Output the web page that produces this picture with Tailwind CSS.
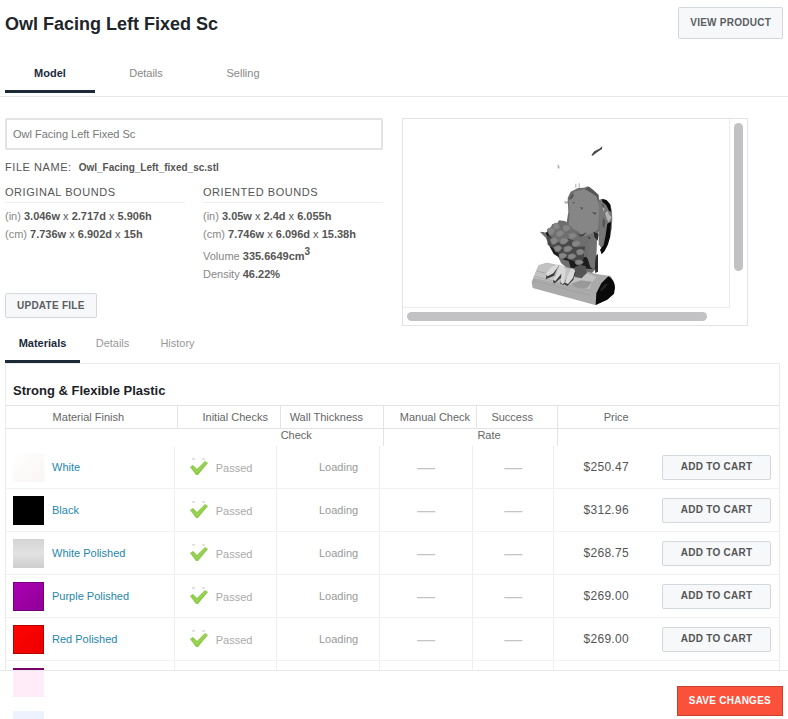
<!DOCTYPE html>
<html lang="en">

<head>
    <meta charset="UTF-8">
    <meta name="viewport" content="width=device-width, initial-scale=1.0">
    <title>Owl Facing Left Fixed Sc</title>
    <script src="https://cdn.jsdelivr.net/npm/@tailwindcss/browser@4"></script>
</head>

<body class="h-screen overflow-hidden bg-white font-['Liberation_Sans',Arial,sans-serif] text-[11px] leading-[18px] text-[#555]">
    <header class="flex items-start justify-between pt-[7px] pr-[5px] pl-[5px]">
        <h1 class="pt-[5px] text-[18px] leading-6 font-bold text-[#20252a]">Owl Facing Left Fixed Sc</h1>
        <button class="h-8 rounded-xs border border-[#d3d8dc] bg-[#f6f8fa] px-[11px] text-[10px] font-bold tracking-wide text-[#5a5e62]">VIEW PRODUCT</button>
    </header>

    <nav class="flex border-b border-[#e6e8e9] pb-[3px] pl-[5px] pt-[12px]">
        <a href="#" class="w-[90px] border-b-[3px] border-[#1b2a36] pt-[13px] pb-[8px] text-center font-bold text-[#1b2a3c]">Model</a>
        <a href="#" class="ml-[2px] w-[98px] pt-[13px] text-center text-[#888]">Details</a>
        <a href="#" class="w-[96px] pt-[13px] text-center text-[#888]">Selling</a>
    </nav>

    <main>
        <section class="grid grid-cols-[378fr_346fr] gap-x-[19px] pt-[21px] pr-10 pl-[5px]">
            <div>
                <input type="text" aria-label="Model name" value="Owl Facing Left Fixed Sc" class="block h-8 w-full rounded-xs border-2 border-[#e2e3e4] px-[6px] text-[11px] text-[#777]">
                <p class="mt-2"><span class="tracking-wider">FILE NAME:</span> <span class="ml-1 text-[10px] font-bold">Owl_Facing_Left_fixed_sc.stl</span></p>
                <div class="mt-[6px] grid grid-cols-[180fr_180fr] gap-x-[18px]">
                    <div>
                        <h2 class="mb-1 border-b border-[#eceeef] pb-px tracking-wider">ORIGINAL BOUNDS</h2>
                        <p><span class="text-[#888]">(in)</span> <b>3.046w</b> x <b>2.717d</b> x <b>5.906h</b></p>
                        <p><span class="text-[#888]">(cm)</span> <b>7.736w</b> x <b>6.902d</b> x <b>15h</b></p>
                    </div>
                    <div>
                        <h2 class="mb-1 border-b border-[#eceeef] pb-px tracking-wider">ORIENTED BOUNDS</h2>
                        <p><span class="text-[#888]">(in)</span> <b>3.05w</b> x <b>2.4d</b> x <b>6.055h</b></p>
                        <p><span class="text-[#888]">(cm)</span> <b>7.746w</b> x <b>6.096d</b> x <b>15.38h</b></p>
                        <p class="mt-1"><span class="text-[#888]">Volume</span> <b>335.6649cm<sup class="text-[10px]">3</sup></b></p>
                        <p><span class="text-[#888]">Density</span> <b>46.22%</b></p>
                    </div>
                </div>
                <button class="mt-[10px] h-[25px] rounded-xs border border-[#d3d8dc] bg-[#f6f8fa] px-[11px] text-[10px] font-bold tracking-wide text-[#5a5e62]">UPDATE FILE</button>
            </div>

            <!-- 3D viewer with its scrollbars -->
            <div class="grid h-[208px] grid-cols-[1fr_17px] grid-rows-[1fr_17px] border border-[#e2e3e4]">
                <div class="flex items-end justify-center border-r border-b border-[#ececec] pl-[18px]">
                    <svg viewBox="0 0 330 504" class="h-[168px] w-[110px]" role="img" aria-label="Owl model">
                        <path d="M214 49l9-12 15-8 9-7-1 8-17 11-11 9z" fill="#444" />
                        <path d="M113 76l5 5v9l-5-4zM166 134h3v12h-3zM176 133h3v13h-3zM132 186l8 2 6-5-1 10-9 1z" fill="#aaa" />
                        <!-- far wing -->
                        <path d="M236 182l12-3 14 6 10 13 4 22 1 20-2 30-14 52-11 14-14-20z" fill="#777" />
                        <path d="M247 180l12 3 11 13 4 22-7-3-8-16-13-12zM262 254l11-6-2 44-7 24-10 20-9 10-5-14 11-14 6-30z" fill="#0b0b0b" />
                        <path d="M255 222l8-6 5 12 7 6-9 16-5-9zM247 205l7 4-3 9z" fill="#b4b4b4" />
                        <path d="M246 190l6 9-3 10zM249 236l7 11-3 20-6-8z" fill="#555" />
                        <!-- body -->
                        <path d="M60 279l12 1 7 8 3-18 9-2 6-13 14-1 6-10 17 2 6 4 5-31-2-42 9-19 22-11 18-1 12-4 13 9 15 13 5 29 2 75-8 30-3 91-12 13-46-3-26-9-21-18-12-26-17-16-8-17-9-17z" fill="#6e6e6e" />
                        <path d="M146 183l18-26 38-8 26 12 10 45-3 65-22 13-18 8-34-22-15-14 3-25z" fill="#868686" />
                        <path d="M195 151l13-7 13 11 15 13 1 24-8-20-18-12zM146 183l10-18 7 3-8 11zM180 204l10 2-5 7zM214 219l16 2-4 7zM156 190l9-1-3 5z" fill="#555" />
                        <path d="M59 278l14 2 9 11 3 24 16 30 24 15 21 6 6 20 24 2 57 3-1-39-10 8-15 2-9-9-20 6-20-2-22-7-10-16-21-14-8-20-14-21-9 2z" fill="#1c1c1c" />
                        <path d="M197 280l10 10 15-9 7 12-1 54-4 46-13-8-9-29 6-26-3-27z" fill="#727272" />
                        <path d="M221 278l15 7-3 20-10-11zM228 350l6-5v53l-9 4z" fill="#2b2b2b" />
                        <path d="M81 290l15 5 8 14 21 2 16-13 24 8 8 18 22-2-5 42-28 3-36-13-24-24-19-13z" fill="#484848" />
                        <g fill="#868686" stroke="#7a7a7a" stroke-width="3">
                            <path d="M83 272q11-12 22 0-2 15-16 17z" />
                            <path d="M100 256q15-9 20 7-5 12-19 6z" />
                            <path d="M109 279q16-11 24 3-9 15-23 9z" />
                            <path d="M129 262q17-9 22 6-8 13-21 8z" />
                            <path d="M91 302q14-13 23 0-5 16-18 13z" />
                            <path d="M120 302q17-11 25 2-9 15-23 10z" />
                            <path d="M146 286q16-10 24 3-8 14-22 9z" />
                            <path d="M102 325q16-11 23 2-6 14-18 10z" />
                            <path d="M132 326q17-11 25 2-9 15-24 9z" />
                            <path d="M157 310q17-10 24 3-8 13-23 8z" />
                            <path d="M117 347q15-10 23 2-7 13-20 8z" />
                            <path d="M145 349q16-10 23 3-8 12-22 7z" />
                            <path d="M170 335q17-9 23 4-7 12-21 7z" />
                            <path d="M165 367q16-9 25 2-6 11-22 6z" />
                        </g>
                        <path d="M167 279q15 16 31 0-4 14-17 14zM200 290q6 6 12 3l-3 9z" fill="#444" />
                        <!-- log -->
                        <path d="M56 379l25-8 153 35 38 5 13 27-5 28-52 33-190-52-3-18z" fill="#aaa" />
                        <path d="M56 379l25-8 36 9 87 24 26 10-16 18-7 20-168-36z" fill="#c2c2c2" />
                        <path d="M39 425l171 44M44 412l165 42M50 396l68 17M134 435l72 16" stroke="#9d9d9d" stroke-width="2" fill="none" />
                        <path d="M153 434l30-10 33 4-13 18-29 2z" fill="#999" />
                        <path d="M227 498l2-35 15-30 21-21q18 9 20 34l-3 18-20 18z" fill="#090909" />
                        <path d="M241 451l14-16 9-1-8 12-14 12z" fill="#242424" />
                        <!-- claws -->
                        <path d="M164 385l15-8 18 4 4 20-16 17-20-4z" fill="#555" />
                        <path d="M101 378l13 5-12 27-25 11 3-13zM116 377l13 5-6 35-21 17-3-9 14-18zM134 398l-3 40-10-4 6-39zM152 393l16 7-8 22-18 19-11-7z" fill="#3c3c3c" />
                        <path d="M97 381l14-6 5 6-16 22-17 9-6-8zM118 376l11 5-5 23-18 22-7-3 11-18zM129 379l8 13-4 39-6 5-5-7 3-32zM154 388l11 8-6 21-15 18-9-4 6-19z" fill="#d9d9d9" />
                    </svg>
                </div>
                <div class="flex justify-center pt-1">
                    <div class="h-[80%] w-[9px] rounded-full bg-[#c2c2c4]"></div>
                </div>
                <div class="flex items-center pl-1">
                    <div class="h-[9px] w-[93%] rounded-full bg-[#c2c2c4]"></div>
                </div>
            </div>
        </section>

        <section class="pt-[2px] pr-2 pl-[5px]">
            <nav class="flex">
                <a href="#" class="w-[75px] border-b-[3px] border-[#1b2a36] pt-[6px] pb-[8px] text-center font-bold text-[#1b2a3c]">Materials</a>
                <a href="#" class="w-[65px] pt-[6px] text-center text-[#999]">Details</a>
                <a href="#" class="w-[65px] pt-[6px] text-center text-[#999]">History</a>
            </nav>

            <div class="border border-[#e9ebec]">
                <h2 class="px-[7px] pt-[18px] pb-[5px] text-[13px] font-bold text-[#1b2227]">Strong &amp; Flexible Plastic</h2>
                <table class="block w-full">
                    <thead class="block">
                        <tr class="grid h-6 grid-cols-[172fr_103fr_103fr_94fr_81fr_104fr_117fr] items-start border-y border-[#e2e4e6] text-[#666] *:font-normal">
                            <th class="h-[22px] border-r border-[#e2e4e6] pt-[2px] pr-[6px]">Material Finish</th>
                            <th class="h-[22px] border-r border-[#e2e4e6] pt-[2px] pl-[13px]">Initial Checks</th>
                            <th class="h-10 border-r border-[#e2e4e6] pt-[2px] text-left"><span class="pl-[9px]">Wall Thickness</span><br>Check</th>
                            <th class="h-[22px] border-r border-[#e2e4e6] pt-[2px] pl-[10px]">Manual Check</th>
                            <th class="h-10 border-r border-[#e2e4e6] pt-[2px] text-left"><span class="pl-[14px]">Success</span><br>Rate</th>
                            <th class="pt-[2px] pl-[12px]">Price</th>
                            <th aria-label="Cart"></th>
                        </tr>
                    </thead>
                    <tbody id="materials" class="block pt-[17px]"></tbody>
                </table>
            </div>
        </section>
    </main>

    <footer class="fixed inset-x-0 bottom-0 flex h-[49px] justify-end border-t border-[#e6e8e9] bg-white/92 pt-[15px] pr-[5px]">
        <button class="h-[30px] border border-[#c9402c] bg-[#fb513b] px-[11px] text-[10px] font-bold tracking-wide text-white">SAVE CHANGES</button>
    </footer>
</body>

<script>
    const materials = [
        { name: 'White', price: '$250.47', swatch: 'bg-linear-to-br from-white to-[#f9f5f3]' },
        { name: 'Black', price: '$312.96', swatch: 'bg-black' },
        { name: 'White Polished', price: '$268.75', swatch: 'bg-linear-to-b from-[#d4d4d4] via-[#e2e2e2] to-[#cecece]' },
        { name: 'Purple Polished', price: '$269.00', swatch: 'border border-[#780080] bg-linear-to-br from-[#ad00b5] to-[#8e0096]' },
        { name: 'Red Polished', price: '$269.00', swatch: 'border border-[#b80000] bg-linear-to-br from-[#ff0500] to-[#ec0000]' },
        { name: '', price: '', swatch: 'border-t-2 border-[#780068] bg-[#ff10a0]' },
        { name: '', price: '', swatch: 'bg-[#3060ff]' },
    ];

    const check = `
        <svg viewBox="0 0 18 18" class="h-[18px] w-[18px]" aria-hidden="true">
            <path d="M2 1h3M12 1h3" stroke="#c5c5c5" stroke-width="1" />
            <path d="M0 9l3-2 4 4 8-8 3 2-10 12H6z" fill="#8fcc49" />
            <path d="M3 10l4 4 9-10" stroke="#a5d765" stroke-width="1" fill="none" />
        </svg>`;

    const cell = 'border-r border-[#eceeef]';

    document.getElementById('materials').innerHTML = materials.map((m) => `
        <tr class="grid h-[43px] grid-cols-[169fr_102fr_103fr_94fr_81fr_108fr_117fr] border-b border-[#f0f1f2] *:flex *:items-center">
            <td class="${cell} pl-[7px]">
                <span class="mr-2 h-[29px] w-[31px] ${m.swatch}"></span>
                ${m.name && `<a href="#" class="text-[#2587ab]">${m.name}</a>`}
            </td>
            <td class="${cell} gap-2 pl-[15px] text-[#aaa]">${m.name && check + '<span class="pt-[2px]">Passed</span>'}</td>
            <td class="${cell} justify-center pl-[22px] text-[#999]">${m.name && 'Loading'}</td>
            <td class="${cell} justify-center text-[18px] text-[#c4c4c4]">${m.name && '—'}</td>
            <td class="${cell} justify-center text-[18px] text-[#c4c4c4]">${m.name && '—'}</td>
            <td class="justify-center pr-1 text-[12px] tracking-wide text-[#555]">${m.price}</td>
            <td class="pr-2">
                ${m.name && '<button class="h-[25px] w-full rounded-xs border border-[#d3d8dc] bg-[#f6f8fa] text-[10px] font-bold tracking-wide text-[#555]">ADD TO CART</button>'}
            </td>
        </tr>`).join('');
</script>

</html>
